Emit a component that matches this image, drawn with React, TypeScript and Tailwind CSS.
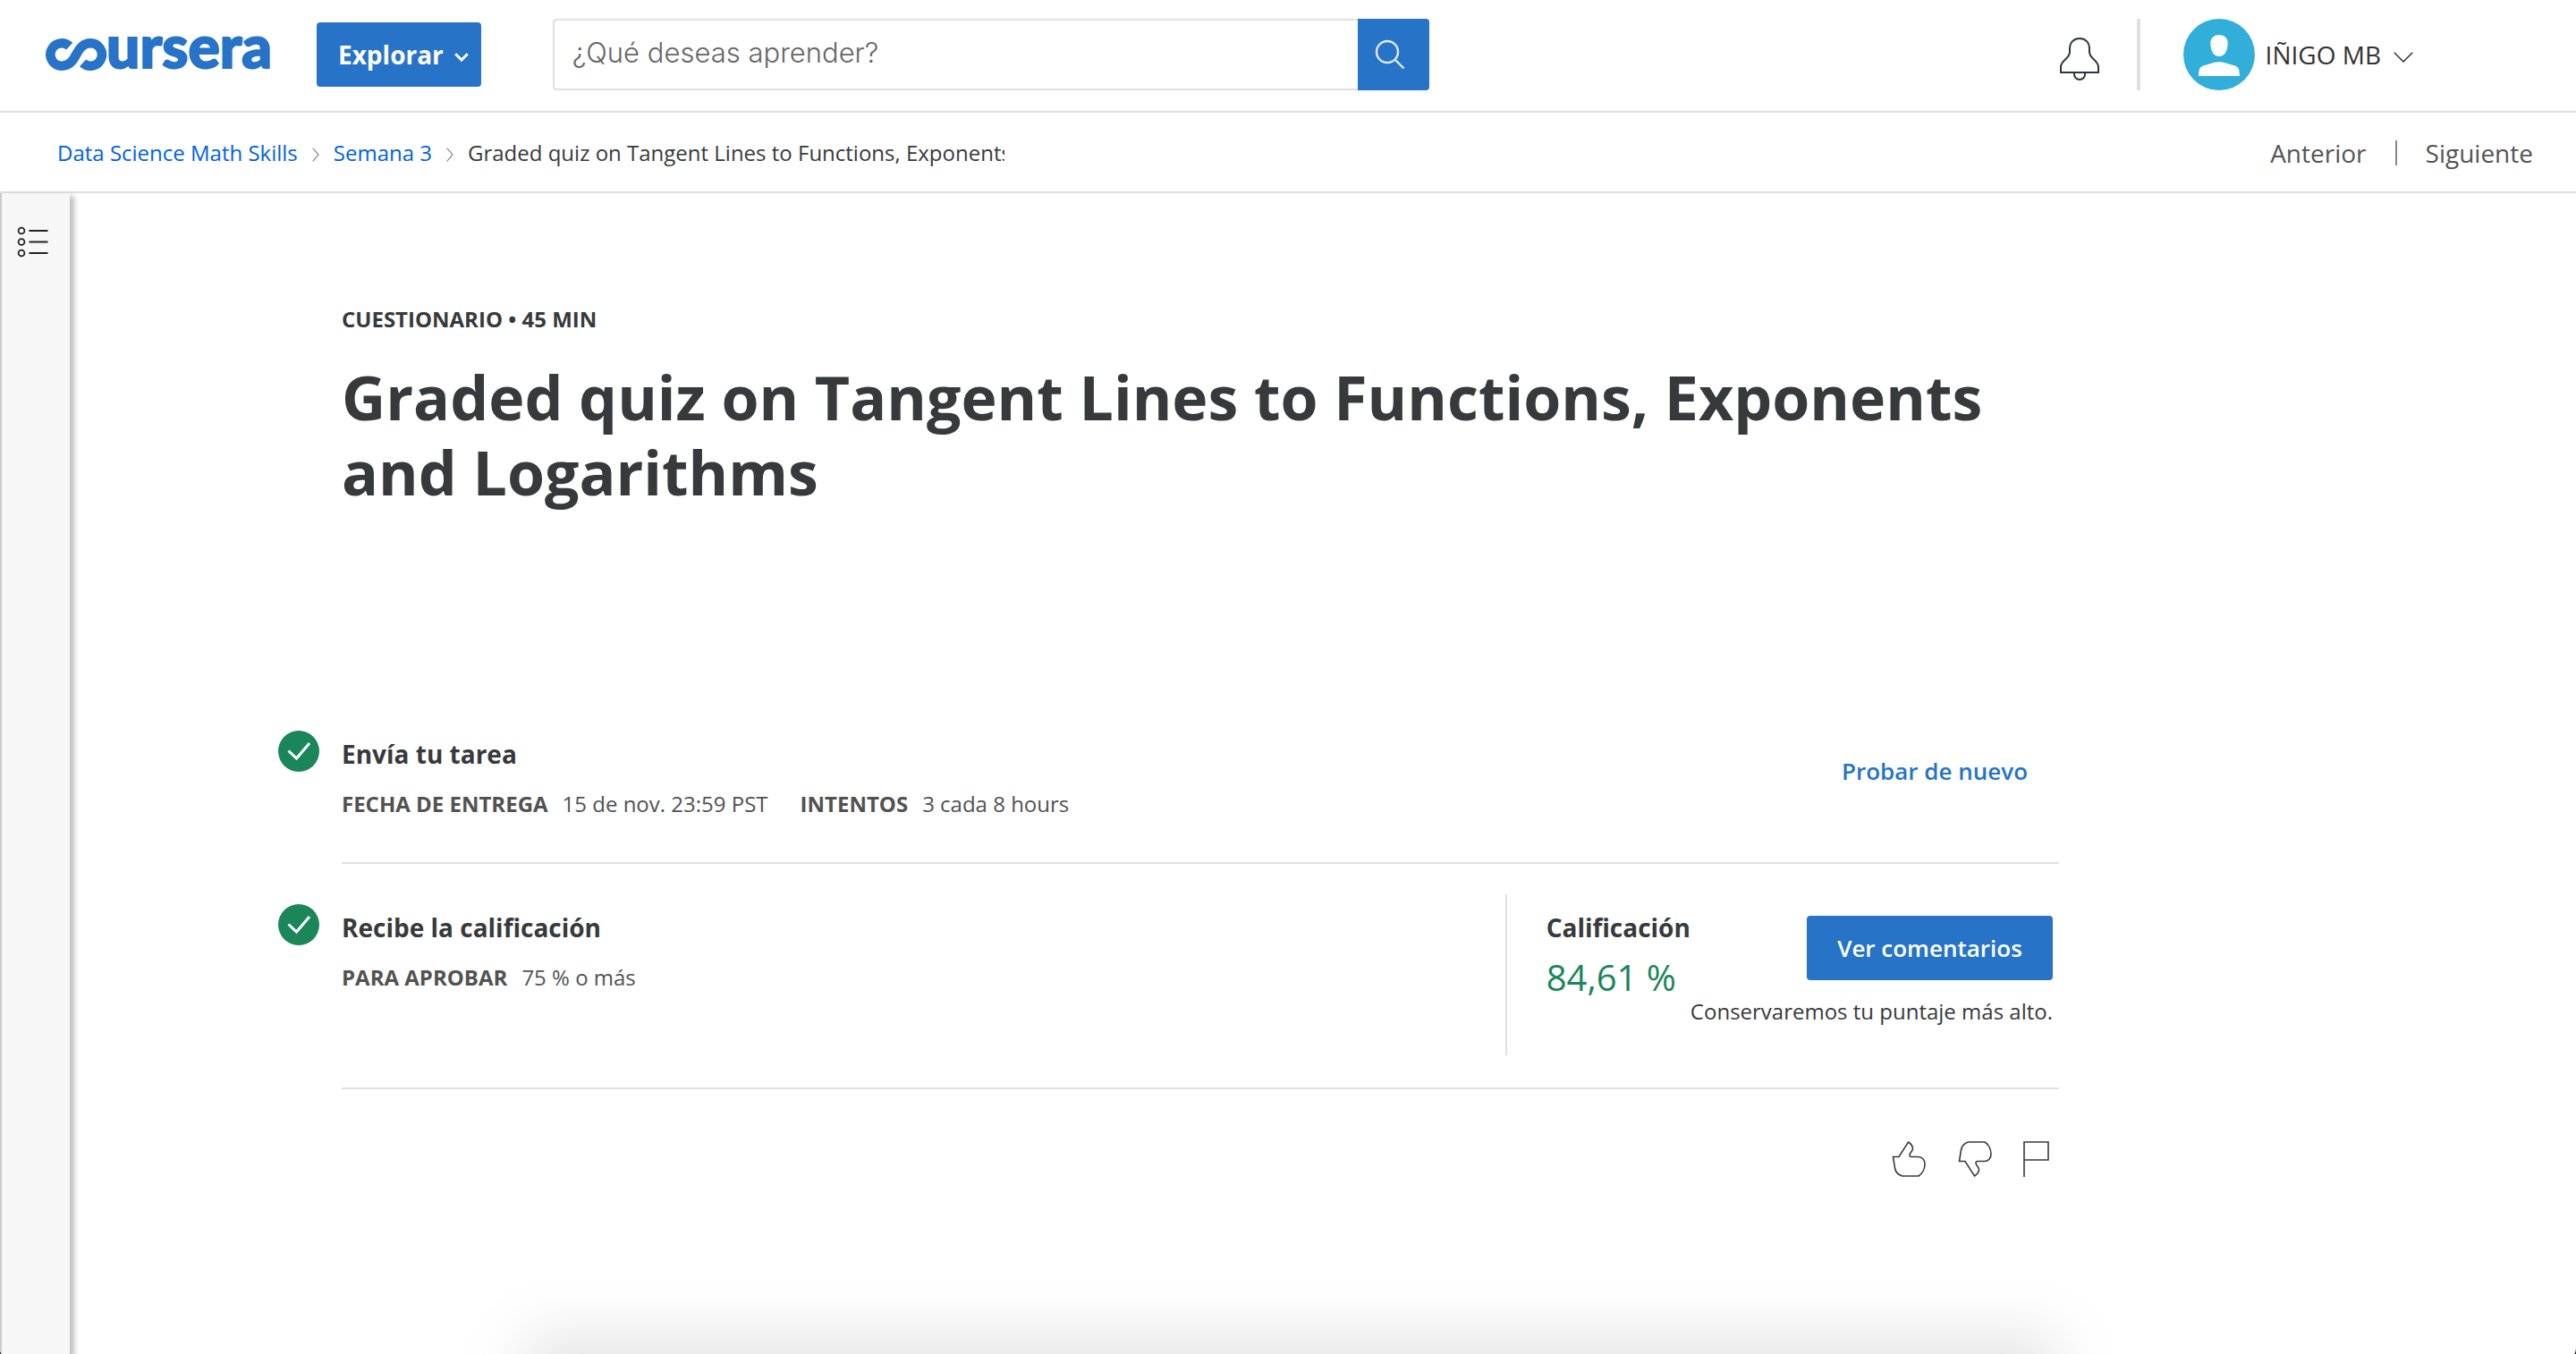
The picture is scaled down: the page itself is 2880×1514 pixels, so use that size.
import React from "react";

function Logo() {
  return (
    <a href="#inicio" aria-label="Coursera" className="shrink-0">
      <svg viewBox="0 -20 256 76" className="h-[76px] w-64" aria-hidden="true">
        <path
          d="M27.7 8.7A12.7 12.7 0 1 0 19 30.7C27 30.7 31 26 35.2 18S43.5 5.3 51.3 5.3A12.7 12.7 0 1 1 42.6 27.3"
          fill="none"
          stroke="#2673c8"
          strokeWidth="10.6"
        />
        <text
          x="69"
          y="33"
          fill="#2673c8"
          stroke="#2673c8"
          strokeWidth="2"
          className="font-['Lato',sans-serif] text-[66px] font-black"
        >
          ursera
        </text>
      </svg>
    </a>
  );
}

function BellIcon() {
  return (
    <svg viewBox="0 0 46 50" className="h-[50px] w-[46px]" fill="none" stroke="#30353b" strokeWidth="2" aria-hidden="true">
      <path d="M2 40V34C2 26 12 25 12 17V13.5C12 6.5 16.5 2 23 2S34 6.5 34 13.5V17C34 25 44 26 44 34V40Z" />
      <path d="M17 40V42A6 6 0 0 0 29 42V40" />
    </svg>
  );
}

function Avatar() {
  return (
    <svg viewBox="0 0 80 80" className="size-20 shrink-0" aria-hidden="true">
      <circle cx="40" cy="40" r="40" fill="#32aeda" />
      <path fill="#fff" d="M40 18C46 18 49.7 22 49.7 27C49.5 36 46 42 40 42S30.5 36 30.3 27C30.3 22 34 18 40 18Z" />
      <path fill="#fff" d="M17 64C17.5 56 18 53.5 24 52C30 50.5 35 48.3 40 48.3S50 50.5 56 52C62 53.5 62.5 56 63 64Z" />
    </svg>
  );
}

function CrumbChevron() {
  return (
    <svg viewBox="0 0 8 16" className="mt-1 h-4 w-2 shrink-0" fill="none" stroke="#888" strokeWidth="1.2" aria-hidden="true">
      <path d="M.7 .7L7 8L.7 15.3" />
    </svg>
  );
}

function CheckCircle() {
  return (
    <svg viewBox="0 0 46 46" className="mt-[45px] mr-[25px] size-[46px] shrink-0" role="img" aria-label="Completado">
      <circle cx="23" cy="23" r="23" fill="#1a865a" />
      <path d="M11.5 22.5L20.5 31L35 14" fill="none" stroke="#fff" strokeWidth="3" />
    </svg>
  );
}

const thumb =
  "M2.5 18.5H9L19.5 2C22.5 4 24.5 7 24.5 9.5C24.5 12 21 14 21 16.5C21 18 22 18.5 23 18.5H30.5C35 18.5 38 22 38 26.5C38 32 35 37.5 31 40H12.5C8 38.5 5.2 35 4.5 31Z";

function Meta({ label, value }: { label: string; value: string }) {
  return (
    <div className="flex gap-4">
      <dt className="font-bold">{label}</dt>
      <dd>{value}</dd>
    </div>
  );
}

function Header() {
  return (
    <header className="flex h-[126px] items-center border-b-2 border-[#e0e0e0] pr-[182px] pb-0.5 pl-[50px]">
      <Logo />
      <button type="button" className="ml-12 flex h-[72px] shrink-0 items-center rounded bg-[#2673c8] pr-3.5 pl-6 text-[28px] font-bold text-white">
        Explorar
        <svg viewBox="0 0 16 10" className="mt-1.5 ml-3 h-2.5 w-4" fill="none" stroke="#fff" strokeWidth="3" aria-hidden="true">
          <path d="M1.2 1.2L8 8L14.8 1.2" />
        </svg>
      </button>
      <form role="search" className="ml-20 flex h-20 w-[980px]">
        <input
          type="text"
          aria-label="Buscar"
          placeholder="¿Qué deseas aprender?"
          className="min-w-0 flex-1 rounded-l border-2 border-r-0 border-[#e0e0e0] px-5 pb-1 font-['Inter',sans-serif] text-[31px] font-light outline-none placeholder:text-[#666]"
        />
        <button type="button" aria-label="Buscar" className="flex w-20 items-center justify-center rounded-r bg-[#2673c8] pr-2">
          <svg viewBox="0 0 34 34" className="size-[34px]" fill="none" stroke="#e6ebf0" strokeWidth="2.4" aria-hidden="true">
            <circle cx="14" cy="14" r="12" />
            <path d="M22.5 22.5L32.5 32.5" />
          </svg>
        </button>
      </form>
      <button type="button" aria-label="Notificaciones" className="mt-2.5 ml-auto">
        <BellIcon />
      </button>
      <span className="ml-[41px] h-20 w-1 bg-[#e0e0e0]" />
      <button type="button" className="ml-12 flex items-center text-[28px] text-[#333]">
        <Avatar />
        <span className="ml-3">IÑIGO MB</span>
        <svg viewBox="0 0 22 12" className="mt-1.5 ml-3.5 h-3 w-[22px]" fill="none" stroke="#333" strokeWidth="1.5" aria-hidden="true">
          <path d="M.8 .8L11 11L21.2 .8" />
        </svg>
      </button>
    </header>
  );
}

function SubHeader() {
  return (
    <div className="flex h-[90px] items-center justify-between border-b-2 border-[#e0e0e0] pt-0.5 pr-12 pl-16">
      <nav aria-label="Ruta" className="flex items-center gap-4 text-[24px] leading-9">
        <a href="#curso" className="text-[#0062e0]">Data Science Math Skills</a>
        <CrumbChevron />
        <a href="#semana" className="text-[#0062e0]">Semana 3</a>
        <CrumbChevron />
        <span className="w-[600px] overflow-hidden whitespace-nowrap text-[#373a3c]">
          Graded quiz on Tangent Lines to Functions, Exponents
        </span>
      </nav>
      <nav aria-label="Lecciones" className="flex items-center gap-8 text-[28px] leading-9 text-[#555]">
        <a href="#anterior">Anterior</a>
        <span className="h-7 w-0.5 bg-[#888]" />
        <a href="#siguiente">Siguiente</a>
      </nav>
    </div>
  );
}

export default function App() {
  return (
    <div className="bg-black">
      <div className="relative flex min-h-screen flex-col overflow-hidden rounded-br-[2px_8px] rounded-bl-[2px_8px] bg-white font-['Open_Sans',sans-serif]">
        <Header />
        <SubHeader />
        <div className="flex flex-1">
          <aside className="w-[78px] shrink-0 border-l-2 border-[#ccc] bg-[#f7f7f7] pt-9 pl-[17px] shadow-[4px_4px_6px_1px_rgba(0,0,0,0.25)]">
            <button type="button" aria-label="Contenido">
              <svg viewBox="0 0 36 36" className="size-9" fill="none" stroke="#222" strokeWidth="1.8" aria-hidden="true">
                <circle cx="5" cy="6" r="3.4" />
                <circle cx="5" cy="18.5" r="3.4" />
                <circle cx="5" cy="31" r="3.4" />
                <path d="M13.5 6H34.5M13.5 18.5H34.5M13.5 31H34.5" />
              </svg>
            </button>
          </aside>

          <main className="max-w-[2224px] flex-1 pl-[233px]">
            <div className="pt-[123px] pl-[71px] text-[#373a3c]">
              <p className="text-[24px] leading-9 font-bold">CUESTIONARIO • 45 MIN</p>
              <h1 className="mt-[27px] text-[68px] leading-[84px] font-bold">
                Graded quiz on Tangent Lines to Functions, Exponents and Logarithms
              </h1>
            </div>

            <section className="mt-[202px] flex">
              <CheckCircle />
              <div className="flex flex-1 justify-between border-b-2 border-[#e0e0e0]">
                <div className="pt-[51px] pb-[47px]">
                  <h2 className="text-[28px] leading-10 font-bold text-[#373a3c]">Envía tu tarea</h2>
                  <dl className="mt-[18px] flex gap-9 text-[24px] leading-9 text-[#525252]">
                    <Meta label="FECHA DE ENTREGA" value="15 de nov. 23:59 PST" />
                    <Meta label="INTENTOS" value="3 cada 8 hours" />
                  </dl>
                </div>
                <button type="button" className="mt-[54px] mr-[35px] h-[72px] text-[26px] font-semibold text-[#2673c8]">
                  Probar de nuevo
                </button>
              </div>
            </section>

            <section className="flex">
              <CheckCircle />
              <div className="flex flex-1 justify-between border-b-2 border-[#e0e0e0]">
                <div className="pt-[51px]">
                  <h2 className="text-[28px] leading-10 font-bold text-[#373a3c]">Recibe la calificación</h2>
                  <dl className="mt-[18px] flex text-[24px] leading-9 text-[#525252]">
                    <Meta label="PARA APROBAR" value="75 % o más" />
                  </dl>
                </div>
                <div className="mt-[34px] mb-9 flex h-[180px] border-l-2 border-[#e0e0e0] pr-[7px] pl-11">
                  <div className="pt-[17px]">
                    <h3 className="text-[28px] leading-10 font-bold text-[#373a3c]">Calificación</h3>
                    <p className="mt-2 text-[40px] leading-[56px] text-[#1a865a]">84,61 %</p>
                  </div>
                  <div className="flex flex-col items-end pt-6">
                    <button type="button" className="h-[72px] w-[275px] rounded bg-[#2673c8] text-[26px] font-semibold text-white">
                      Ver comentarios
                    </button>
                    <p className="mt-[17px] text-[24px] leading-9 text-[#373a3c]">Conservaremos tu puntaje más alto.</p>
                  </div>
                </div>
              </div>
            </section>

            <div className="mt-[57px] flex justify-end gap-[34px] pr-1 pb-16">
              <button type="button" aria-label="Me gusta">
                <svg viewBox="0 0 40 42" className="h-[42px] w-10" fill="none" stroke="#373a3c" strokeWidth="1.6" aria-hidden="true">
                  <path d={thumb} />
                </svg>
              </button>
              <button type="button" aria-label="No me gusta">
                <svg viewBox="0 0 40 42" className="h-[42px] w-10" fill="none" stroke="#373a3c" strokeWidth="1.6" aria-hidden="true">
                  <path d={thumb} transform="matrix(1 0 0 -1 0 42)" />
                </svg>
              </button>
              <button type="button" aria-label="Informar un problema">
                <svg viewBox="0 0 36 42" className="h-[42px] w-9" fill="none" stroke="#373a3c" strokeWidth="1.6" aria-hidden="true">
                  <path d="M1 41V2H28V22H1" />
                </svg>
              </button>
            </div>
          </main>
        </div>
        <div className="pointer-events-none absolute right-[580px] -bottom-[200px] left-[587px] h-[222px] bg-black/10 blur-[32px]" />
      </div>
    </div>
  );
}
